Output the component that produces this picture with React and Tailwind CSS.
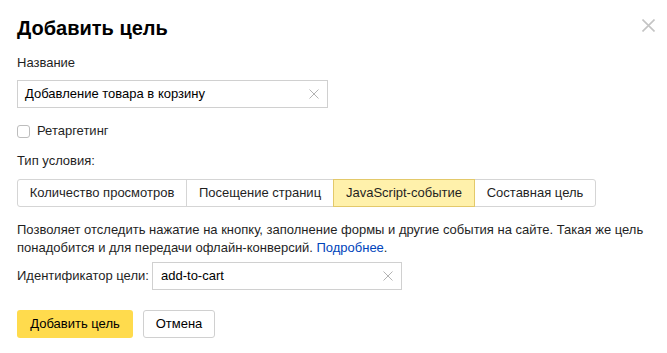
import React from "react";

function ClearX({ className = "" }) {
  return (
    <svg width="10" height="10" viewBox="0 0 10 10" className={className}>
      <path d="M0.5 0.5 L9.5 9.5 M9.5 0.5 L0.5 9.5" stroke="#b3b3b3" strokeWidth="1" fill="none" />
    </svg>
  );
}

export default function App() {
  const segs = [
    { t: "Количество просмотров", w: "w-[170px]" },
    { t: "Посещение страниц", w: "w-[148px]" },
    { t: "JavaScript-событие", w: "w-[142px]", active: true },
    { t: "Составная цель", w: "w-[122px]" },
  ];
  return (
    <div
      className="relative w-[667px] h-[353px] bg-white text-[#1f1f1f] overflow-hidden"
      style={{ fontFamily: '"Liberation Sans", Arial, sans-serif' }}
    >
      <button className="absolute left-[642px] top-[19px] w-[13px] h-[13px]">
        <svg width="13" height="13" viewBox="0 0 13 13">
          <path d="M0.5 0.5 L12.5 12.5 M12.5 0.5 L0.5 12.5" stroke="#c4c4c4" strokeWidth="1.6" fill="none" />
        </svg>
      </button>
      <div className="flex flex-col pl-[17px] pt-[16px]">
        <h1 className="text-[20px] leading-[24px] font-bold text-black">Добавить цель</h1>
        <div className="mt-[15px] text-[13px] leading-[16px]">Название</div>
        <div className="mt-[9px] flex items-center w-[311px] h-[28px] border border-[#d0d0d0] pl-[7px] pr-[8px]">
          <span className="flex-1 text-[13px] leading-[16px] text-black">Добавление товара в корзину</span>
          <ClearX />
        </div>
        <label className="mt-[15px] flex items-center h-[16px] gap-[7px]">
          <span className="w-[13px] h-[13px] rounded-[3px] border border-[#bdbdbd] bg-white" />
          <span className="text-[13px] leading-[16px]">Ретаргетинг</span>
        </label>
        <div className="mt-[14px] text-[13px] leading-[16px]">Тип условия:</div>
        <div className="mt-[10px] flex h-[28px]">
          {segs.map((s, i) => (
            <div
              key={i}
              className={
                s.active
                  ? "flex items-center justify-center text-[13px] border border-[#e3c96a] bg-[#fff1ab] -ml-px relative z-10 " + s.w
                  : i === 0
                  ? "flex items-center justify-center text-[13px] border border-[#d5d5d5] bg-white rounded-l-[3px] " + s.w
                  : i === segs.length - 1
                  ? "flex items-center justify-center text-[13px] border border-[#d5d5d5] bg-white rounded-r-[3px] -ml-px " + s.w
                  : "flex items-center justify-center text-[13px] border border-[#d5d5d5] bg-white -ml-px " + s.w
              }
            >
              {s.t}
            </div>
          ))}
        </div>
        <p className="mt-[14px] text-[13px] leading-[18px] w-[640px]">
          Позволяет отследить нажатие на кнопку, заполнение формы и другие события на сайте. Такая же цель
          понадобится и для передачи офлайн-конверсий. <a className="text-[#0044bb]">Подробнее</a>.
        </p>
        <div className="mt-[5px] flex items-center">
          <span className="w-[135px] whitespace-nowrap text-[13px] leading-[16px]">Идентификатор цели:</span>
          <div className="flex items-center w-[250px] h-[28px] border border-[#d0d0d0] pl-[8px] pr-[8px]">
            <span className="flex-1 text-[13px] leading-[16px] text-black">add-to-cart</span>
            <ClearX />
          </div>
        </div>
        <div className="mt-[20px] flex gap-[10px]">
          <button className="h-[28px] w-[116px] rounded-[3px] bg-[#ffdb4d] text-[13px] text-black">
            Добавить цель
          </button>
          <button className="h-[28px] w-[72px] rounded-[3px] border border-[#d0d0d0] bg-white text-[13px] text-black">
            Отмена
          </button>
        </div>
      </div>
    </div>
  );
}
